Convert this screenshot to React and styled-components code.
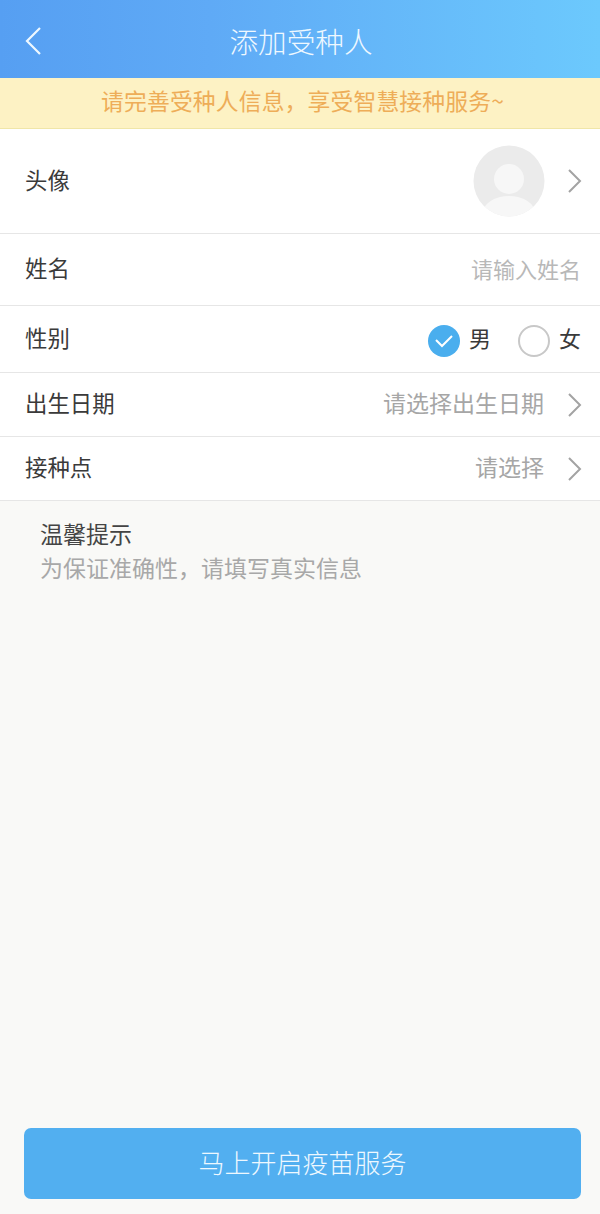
import React from "react";
import styled, { createGlobalStyle } from "styled-components";

const GlobalStyle = createGlobalStyle`
  html, body {
    margin: 0;
    padding: 0;
    background: #f9f9f7;
    font-family: "Noto Sans CJK SC", "Liberation Sans", sans-serif;
  }
  * { box-sizing: border-box; }
`;

const Page = styled.div`
  width: 600px;
  height: 1214px;
  display: flex;
  flex-direction: column;
  background: #f9f9f7;
`;

const Header = styled.header`
  height: 78px;
  flex: none;
  display: flex;
  align-items: center;
  justify-content: center;
  position: relative;
  background: linear-gradient(90deg, #569ff2 0%, #5faaf6 35%, #6cc9fd 100%);
`;

const BackButton = styled.svg`
  position: absolute;
  left: 24px;
  top: 26px;
  width: 19px;
  height: 30px;
`;

const Title = styled.h1`
  margin: 0 0 0 2px;
  font-size: 28.6px;
  font-weight: 300;
  line-height: 1;
  color: #eef8ff;
  padding-top: 4px;
`;

const Notice = styled.div`
  height: 51px;
  flex: none;
  display: flex;
  align-items: center;
  justify-content: center;
  padding: 0 0 5px 5px;
  background: #fdf2c4;
  border-bottom: 1px solid #f0e6a8;
  color: #eead58;
  font-size: 22.8px;
  letter-spacing: 0.15px;
`;

const Row = styled.div`
  height: ${(p) => p.$height}px;
  flex: none;
  display: flex;
  align-items: center;
  justify-content: space-between;
  padding: 0 18px 0 25px;
  background: #fff;
  border-bottom: 1px solid #e6e6e6;
`;

const Label = styled.span`
  font-size: 22.4px;
  color: #3a3a3a;
  padding-bottom: 5px;
`;

const Side = styled.div`
  display: flex;
  align-items: center;
`;

const Placeholder = styled.span`
  font-size: ${(p) => (p.$light ? 22 : 23)}px;
  color: ${(p) => (p.$light ? "#b8b8b8" : "#a6a6a6")};
  margin-right: ${(p) => (p.$light ? 1 : 0)}px;
  padding-bottom: ${(p) => (p.$light ? 4 : 6)}px;
`;

const Chevron = styled.svg`
  width: 15px;
  height: 26px;
  margin-left: 23px;
`;

const Avatar = styled.svg`
  width: 72px;
  height: 72px;
  margin-right: -1px;
`;

const Radio = styled.span`
  width: 32px;
  height: 32px;
  margin-top: 4px;
  border-radius: 50%;
  display: flex;
  align-items: center;
  justify-content: center;
  background: ${(p) => (p.$checked ? "#4aaeee" : "#fff")};
  border: ${(p) => (p.$checked ? "none" : "2px solid #c8c8c8")};
`;

const RadioText = styled.span`
  font-size: 22px;
  color: #3a3a3a;
  margin-left: 9px;
  margin-right: ${(p) => p.$gap}px;
  padding-bottom: 4px;
`;

const Tips = styled.section`
  padding: 16px 40px 0;
  flex: 1;
`;

const TipsTitle = styled.div`
  font-size: 23px;
  line-height: 32px;
  color: #444;
`;

const TipsText = styled.div`
  font-size: 23px;
  line-height: 37px;
  color: #a8a8a8;
`;

const Footer = styled.div`
  padding: 0 19px 15px 24px;
`;

const SubmitButton = styled.button`
  width: 100%;
  height: 71px;
  padding: 0 0 5px;
  border: none;
  border-radius: 7px;
  background: #52aff0;
  color: #eef8ff;
  font-family: inherit;
  font-size: 26px;
  font-weight: 300;
`;

const ChevronIcon = () => (
  <Chevron viewBox="0 0 15 26">
    <path d="M2 2 L13 13 L2 24" fill="none" stroke="#a3a3a3" strokeWidth="2" />
  </Chevron>
);

const App = () => {
  return (
    <Page>
      <GlobalStyle />
      <Header>
        <BackButton viewBox="0 0 19 30">
          <path d="M16 2 L3 15 L16 28" fill="none" stroke="#eef8ff" strokeWidth="2.2" />
        </BackButton>
        <Title>添加受种人</Title>
      </Header>
      <Notice>请完善受种人信息，享受智慧接种服务~</Notice>
      <Row $height={105}>
        <Label>头像</Label>
        <Side>
          <Avatar viewBox="0 0 72 72">
            <defs>
              <clipPath id="avatarClip">
                <circle cx="36" cy="36" r="35.5" />
              </clipPath>
            </defs>
            <circle cx="36" cy="36" r="35.5" fill="#ebebeb" />
            <g clipPath="url(#avatarClip)" fill="#f7f7f7">
              <circle cx="36" cy="34" r="15" />
              <ellipse cx="36" cy="68" rx="26" ry="17" />
            </g>
          </Avatar>
          <ChevronIcon />
        </Side>
      </Row>
      <Row $height={72}>
        <Label>姓名</Label>
        <Placeholder $light>请输入姓名</Placeholder>
      </Row>
      <Row $height={67}>
        <Label>性别</Label>
        <Side>
          <Radio $checked>
            <svg width="18" height="14" viewBox="0 0 18 14">
              <path d="M1 6 L7 12 L17 2" fill="none" stroke="#fff" strokeWidth="2" />
            </svg>
          </Radio>
          <RadioText $gap={27}>男</RadioText>
          <Radio />
          <RadioText $gap={1}>女</RadioText>
        </Side>
      </Row>
      <Row $height={64}>
        <Label>出生日期</Label>
        <Side>
          <Placeholder>请选择出生日期</Placeholder>
          <ChevronIcon />
        </Side>
      </Row>
      <Row $height={64}>
        <Label>接种点</Label>
        <Side>
          <Placeholder>请选择</Placeholder>
          <ChevronIcon />
        </Side>
      </Row>
      <Tips>
        <TipsTitle>温馨提示</TipsTitle>
        <TipsText>为保证准确性，请填写真实信息</TipsText>
      </Tips>
      <Footer>
        <SubmitButton>马上开启疫苗服务</SubmitButton>
      </Footer>
    </Page>
  );
};

export default App;
